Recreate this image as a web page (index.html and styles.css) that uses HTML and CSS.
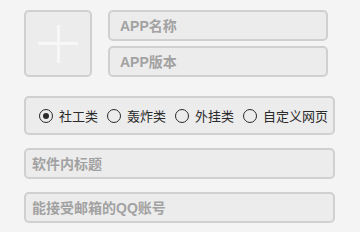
FILE: index.html
```html
<!DOCTYPE html>
<html lang="zh">
<head>
<meta charset="utf-8">
<link rel="stylesheet" href="styles.css">
</head>
<body>
<div class="page">
  <div class="top">
    <div class="icon-box">
      <svg width="68" height="67" viewBox="0 0 68 67">
        <rect x="33" y="15" width="3" height="38" fill="#f7f7f7"/>
        <rect x="14" y="32" width="40" height="3" fill="#f7f7f7"/>
      </svg>
    </div>
    <div class="fields">
      <input class="field wide" placeholder="APP名称">
      <input class="field wide" placeholder="APP版本">
    </div>
  </div>
  <div class="radios">
    <label class="radio"><span class="dot checked"></span>社工类</label>
    <label class="radio"><span class="dot"></span>轰炸类</label>
    <label class="radio"><span class="dot"></span>外挂类</label>
    <label class="radio"><span class="dot"></span>自定义网页</label>
  </div>
  <input class="field full" placeholder="软件内标题">
  <input class="field full" placeholder="能接受邮箱的QQ账号">
</div>
</body>
</html>
```
FILE: styles.css
```css
html, body {
  margin: 0;
  padding: 0;
  background: #f4f4f4;
  font-family: "Noto Sans CJK SC", "Noto Sans", sans-serif;
}
.page {
  padding: 10px 25px 0 24px;
  display: flex;
  flex-direction: column;
}
.top {
  display: flex;
  gap: 16px;
  height: 67px;
}
.icon-box {
  width: 68px;
  height: 67px;
  box-sizing: border-box;
  border: 2px solid #d0d0d3;
  border-radius: 5px;
  background: #ececec;
  position: relative;
  overflow: hidden;
}
.icon-box svg {
  position: absolute;
  left: -2px;
  top: -2px;
}
.fields {
  display: flex;
  flex-direction: column;
  gap: 5px;
  width: 220px;
}
.field {
  box-sizing: border-box;
  height: 31px;
  margin: 0;
  border: 2px solid #d0d0d3;
  border-radius: 5px;
  background: #ececec;
  font-family: "Liberation Sans", "Noto Sans CJK SC", sans-serif;
  font-size: 14px;
  font-weight: bold;
  color: #333;
  outline: none;
}
.field::placeholder {
  color: #a2a2a2;
  opacity: 1;
}
.wide {
  width: 220px;
  padding: 0 0 0 10px;
}
.full {
  width: 311px;
  padding: 0 0 0 6px;
  margin-top: 13px;
}
.radios {
  margin-top: 19px;
  box-sizing: border-box;
  width: 311px;
  height: 39px;
  border: 2px solid #d0d0d3;
  border-radius: 5px;
  background: #ececec;
  display: flex;
  align-items: center;
  padding-left: 13px;
  gap: 9px;
}
.radio {
  display: flex;
  align-items: center;
  gap: 6px;
  font-size: 13px;
  color: #2a2a2a;
  line-height: 1;
}
.dot {
  box-sizing: border-box;
  width: 14px;
  height: 14px;
  border: 1.7px solid #2a2a2a;
  border-radius: 50%;
  display: flex;
  align-items: center;
  justify-content: center;
}
.dot.checked::after {
  content: "";
  width: 6px;
  height: 6px;
  border-radius: 50%;
  background: #2a2a2a;
}
```
